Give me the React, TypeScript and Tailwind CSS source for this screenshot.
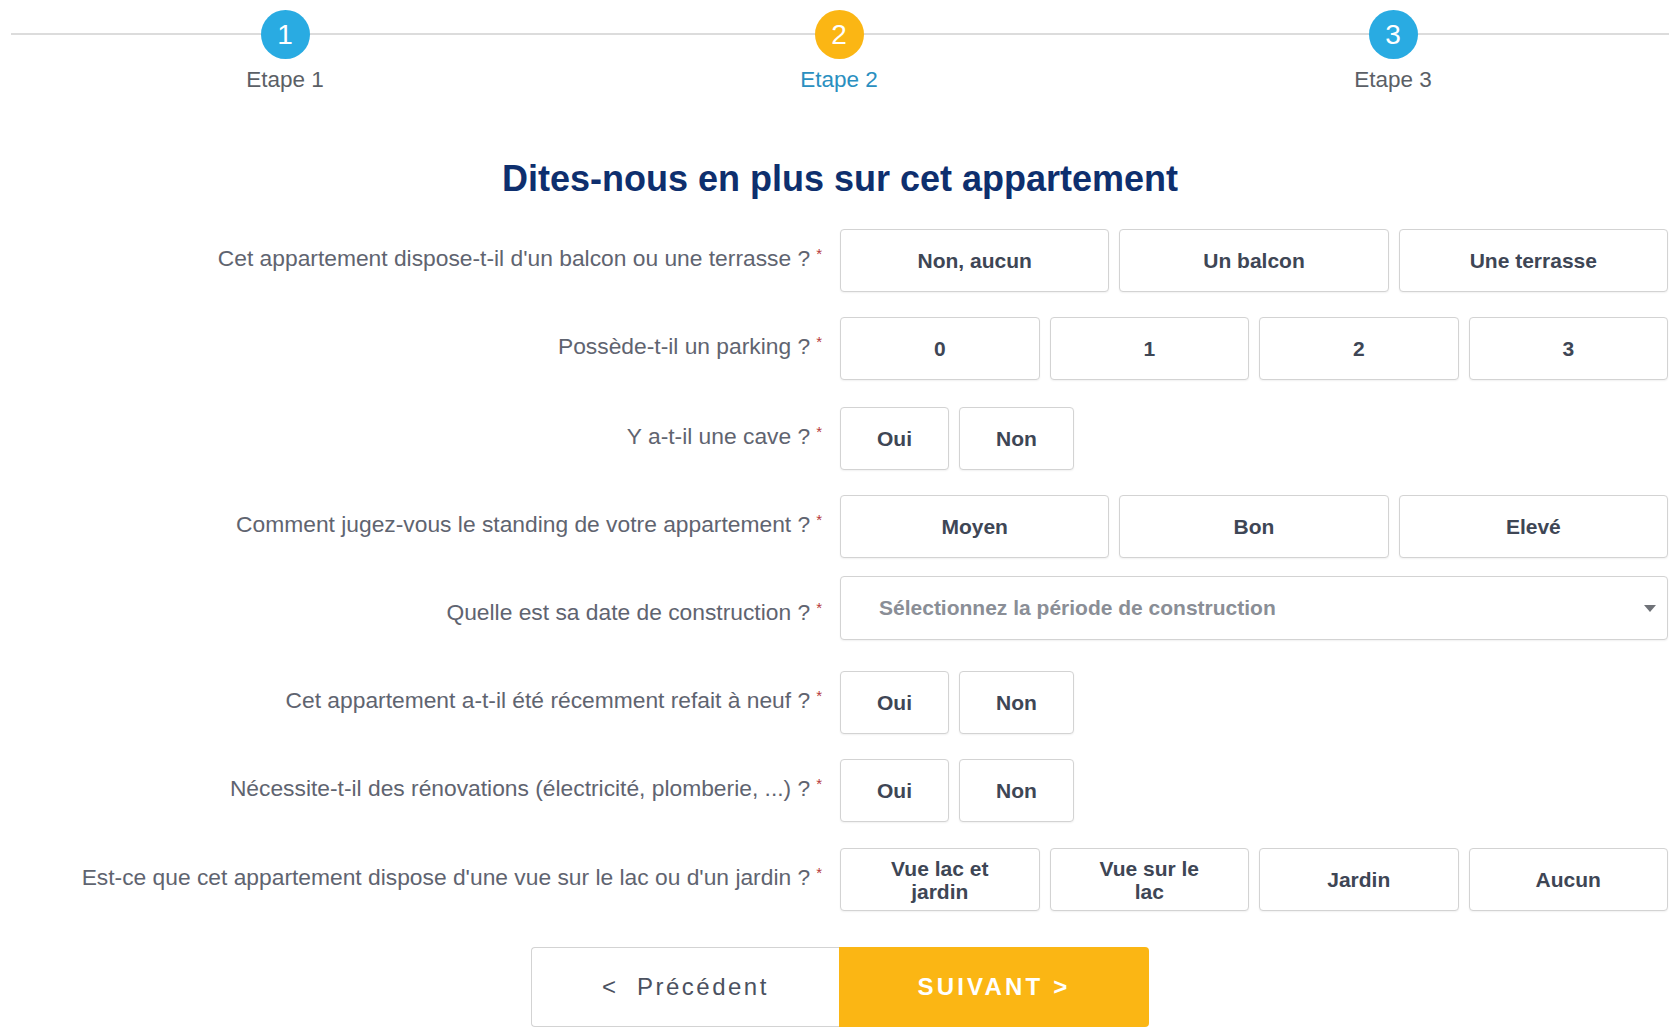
import { useState } from 'react';

const font = { fontFamily: '"Liberation Sans", Arial, sans-serif' };

interface Step {
  n: number;
  label: string;
  active?: boolean;
}

const steps: Step[] = [
  { n: 1, label: 'Etape 1' },
  { n: 2, label: 'Etape 2', active: true },
  { n: 3, label: 'Etape 3' },
];

function Stepper() {
  return (
    <div className="relative pl-[8px] pr-[4px] pt-[10px]">
      {/* grey track behind the circles */}
      <div className="absolute left-[11px] right-[5px] top-[33px] h-[2px] bg-[#dcdcdc]" />
      <div className="relative grid grid-cols-3">
        {steps.map((s) => (
          <div key={s.n} className="flex flex-col items-center">
            <div
              className={`flex h-[49px] w-[49px] items-center justify-center rounded-full text-[28px] leading-none text-white ${
                s.active ? 'bg-[#fbb614]' : 'bg-[#29abe2]'
              }`}
            >
              {s.n}
            </div>
            <div
              className={`mt-[8px] text-[22.5px] leading-[26px] ${
                s.active ? 'text-[#2a8fc0]' : 'text-[#5b5f66]'
              }`}
            >
              {s.label}
            </div>
          </div>
        ))}
      </div>
    </div>
  );
}

function Label({ children, className = 'pb-[2px]' }: { children: string; className?: string }) {
  return (
    <div className={`w-[822px] shrink-0 text-right text-[22.8px] leading-[28px] text-[#5f6470] ${className}`}>
      {children}
      <span className="relative -top-[7px] ml-[6px] text-[15px] text-[#b5383a]">*</span>
    </div>
  );
}

function Choice({
  value,
  selected,
  onClick,
  grow,
}: {
  value: string;
  selected: boolean;
  onClick: () => void;
  grow?: boolean;
}) {
  return (
    <button
      onClick={onClick}
      className={`flex h-[63px] items-center justify-center rounded-[4px] border border-[#d3d3d3] text-center text-[21px] font-bold leading-[23px] shadow-[0_1px_2px_rgba(0,0,0,0.06)] ${
        grow ? 'flex-1 basis-0 px-[40px]' : 'px-[36px]'
      } ${selected ? 'border-[#29abe2] bg-[#eaf7fd] text-[#1d7fae]' : 'bg-white text-[#3e4655]'}`}
    >
      {value}
    </button>
  );
}

function Row({
  label,
  options,
  grow = true,
  className = '',
}: {
  label: string;
  options: string[];
  grow?: boolean;
  className?: string;
}) {
  const [value, setValue] = useState<string | null>(null);
  return (
    <div className={`flex items-center gap-[18px] ${className}`}>
      <Label>{label}</Label>
      <div className="flex w-[828px] gap-[10px]">
        {options.map((o) => (
          <Choice key={o} value={o} grow={grow} selected={value === o} onClick={() => setValue(o)} />
        ))}
      </div>
    </div>
  );
}

export default function App() {
  return (
    <div className="min-h-screen w-full bg-white" style={font}>
      <Stepper />

      <h1 className="mt-[66px] pl-[6px] text-center text-[36px] font-bold leading-[40px] text-[#0e2f6e]">
        Dites-nous en plus sur cet appartement
      </h1>

      <div className="mt-[30px] flex flex-col">
        <Row
          label="Cet appartement dispose-t-il d'un balcon ou une terrasse ?"
          options={['Non, aucun', 'Un balcon', 'Une terrasse']}
        />
        <Row className="mt-[25px]" label="Possède-t-il un parking ?" options={['0', '1', '2', '3']} />
        <Row className="mt-[27px]" label="Y a-t-il une cave ?" options={['Oui', 'Non']} grow={false} />
        <Row
          className="mt-[25px]"
          label="Comment jugez-vous le standing de votre appartement ?"
          options={['Moyen', 'Bon', 'Elevé']}
        />

        <div className="mt-[18px] flex items-center gap-[18px]">
          <Label className="pt-[10px]">Quelle est sa date de construction ?</Label>
          <div className="relative w-[828px]">
            <div className="flex h-[64px] items-center rounded-[4px] border border-[#d3d3d3] bg-white pl-[38px] pr-[40px] text-[21px] font-bold text-[#8a8e96] shadow-[0_1px_2px_rgba(0,0,0,0.06)]">
              Sélectionnez la période de construction
            </div>
            <svg
              className="absolute right-[12px] top-[29px]"
              width="12"
              height="8"
              viewBox="0 0 12 8"
            >
              <path d="M0 0 L12 0 L6 7 Z" fill="#6f7278" />
            </svg>
          </div>
        </div>

        <Row
          className="mt-[31px]"
          label="Cet appartement a-t-il été récemment refait à neuf ?"
          options={['Oui', 'Non']}
          grow={false}
        />
        <Row
          className="mt-[25px]"
          label="Nécessite-t-il des rénovations (électricité, plomberie, ...) ?"
          options={['Oui', 'Non']}
          grow={false}
        />
        <Row
          className="mt-[26px]"
          label="Est-ce que cet appartement dispose d'une vue sur le lac ou d'un jardin ?"
          options={['Vue lac et jardin', 'Vue sur le lac', 'Jardin', 'Aucun']}
        />
      </div>

      <div className="mt-[36px] flex justify-center pl-[6px]">
        <button className="flex h-[80px] w-[308px] items-center justify-center rounded-l-[4px] border border-r-0 border-[#d3d3d3] bg-white text-[24px] tracking-[2.5px] text-[#4b5160]">
          &lt;&nbsp;&nbsp;Précédent
        </button>
        <button className="flex h-[80px] w-[310px] items-center justify-center rounded-r-[4px] bg-[#fbb614] text-[24px] font-bold tracking-[3.2px] text-white">
          SUIVANT &gt;
        </button>
      </div>
    </div>
  );
}
